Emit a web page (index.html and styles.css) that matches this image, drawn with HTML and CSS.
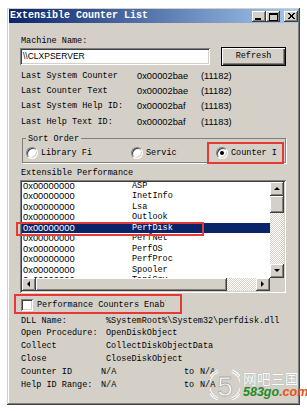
FILE: index.html
```html
<!DOCTYPE html>
<html lang="en">
<head>
    <meta charset="UTF-8">
    <meta name="viewport" content="width=device-width, initial-scale=1.0">
    <title>Extensible Counter List</title>
    <link rel="stylesheet" href="styles.css">
</head>
<body>
    <div class="window">
        <div class="titlebar">
            <span class="title">Extensible Counter List</span>
            <span class="ctl ctl-min"></span>
            <span class="ctl ctl-max"></span>
            <span class="ctl ctl-close">
                <svg width="14" height="11" viewBox="0 0 14 11">
                    <path d="M4 2 L10 8 M5 2 L11 8 M10 2 L4 8 M11 2 L5 8" stroke="#000" stroke-width="1"/>
                </svg>
            </span>
        </div>
        <div class="content">
            <div class="label">Machine Name:</div>
            <div class="machine-row">
                <div class="textbox">\\CLXPSERVER</div>
                <div class="button">Refresh</div>
            </div>
            <div class="info">
                <span>Last System Counter</span><span class="num">0x00002bae</span><span class="num">(11182)</span>
                <span>Last Counter Text</span><span class="num">0x00002bae</span><span class="num">(11182)</span>
                <span>Last System Help ID:</span><span class="num">0x00002baf</span><span class="num">(11183)</span>
                <span>Last Help Text ID:</span><span class="num">0x00002baf</span><span class="num">(11183)</span>
            </div>
            <fieldset class="group">
                <legend>Sort Order</legend>
                <div class="radios">
                    <label class="radio"><span class="radio-box"></span>Library Fi</label>
                    <label class="radio"><span class="radio-box"></span>Servic</label>
                    <label class="radio marked"><span class="radio-box checked"></span>Counter I</label>
                </div>
            </fieldset>
            <div class="label list-label">Extensible Performance</div>
            <div class="listbox">
                <div class="rows">
                    <div class="row"><span class="hex">0x00000000</span><span>ASP</span></div>
                    <div class="row"><span class="hex">0x00000000</span><span>InetInfo</span></div>
                    <div class="row"><span class="hex">0x00000000</span><span>Lsa</span></div>
                    <div class="row"><span class="hex">0x00000000</span><span>Outlook</span></div>
                    <div class="row selected"><span class="hex">0x00000000</span><span>PerfDisk</span></div>
                    <div class="row"><span class="hex">0x00000000</span><span>PerfNet</span></div>
                    <div class="row"><span class="hex">0x00000000</span><span>PerfOS</span></div>
                    <div class="row"><span class="hex">0x00000000</span><span>PerfProc</span></div>
                    <div class="row"><span class="hex">0x00000000</span><span>Spooler</span></div>
                    <div class="row"><span class="hex">0x00000000</span><span>TapiSrv</span></div>
                </div>
                <div class="vscroll">
                    <span class="sbtn arrow-up"></span>
                    <span class="sbtn vthumb"></span>
                    <span class="track"></span>
                    <span class="sbtn arrow-down"></span>
                </div>
                <div class="hscroll">
                    <span class="sbtn arrow-left"></span>
                    <span class="sbtn hthumb"></span>
                    <span class="track"></span>
                    <span class="sbtn arrow-right"></span>
                </div>
                <div class="corner"></div>
                <div class="mark-row"></div>
            </div>
            <div class="check-row">
                <span class="check-box"></span>
                <span class="check-text">Performance Counters Enabled</span>
            </div>
            <div class="details">
                <span>DLL Name:</span><span>%SystemRoot%\System32\perfdisk.dll</span>
                <span>Open Procedure:</span><span>OpenDiskObject</span>
                <span>Collect</span><span>CollectDiskObjectData</span>
                <span>Close</span><span>CloseDiskObject</span>
            </div>
            <div class="range">
                <span>Counter ID</span><span>N/A</span><span>to</span><span>N/A</span>
                <span>Help ID Range:</span><span>N/A</span><span>to</span><span>N/A</span>
            </div>
        </div>
        <div class="watermark">
            <svg width="30" height="36" viewBox="0 0 30 36">
                <path d="M8 4 A15 15 0 0 0 8 32" fill="none" stroke="#fff" stroke-width="3"/>
                <path d="M8 4 A15 15 0 0 0 8 32" fill="none" stroke="#bbb" stroke-width="1"/>
                <path d="M22 4 A15 15 0 0 1 22 32" fill="none" stroke="#fff" stroke-width="3"/>
                <path d="M22 4 A15 15 0 0 1 22 32" fill="none" stroke="#bbb" stroke-width="1"/>
                <text x="15" y="29" text-anchor="middle" font-family="Liberation Sans, sans-serif" font-size="28" fill="#fff" stroke="#aaa" stroke-width="0.8">5</text>
            </svg>
            <div class="wm-text">
                <span class="wm-cn">网吧三国</span>
                <span class="wm-site"><b>583go</b><i>.com</i></span>
            </div>
        </div>
    </div>
</body>
</html>
```

FILE: styles.css
```css
body {
    margin: 0;
    background: #fff;
    font-family: "Liberation Mono", monospace;
    font-size: 8.5px;
    color: #000;
}
.window {
    position: relative;
    margin: 8px 0 0 7px;
    width: 293px;
    height: 397px;
    box-sizing: border-box;
    padding: 1px 2px 2px;
    background: #d4d0c8;
    box-shadow: inset -1px -1px #404040, inset 1px 1px #d4d0c8, inset -2px -2px #808080, inset 2px 2px #fff;
}
.titlebar {
    display: flex;
    align-items: center;
    height: 14px;
    padding-left: 1px;
    background: linear-gradient(to right, #0a246a, #a6caf0);
    color: #fff;
}
.title {
    flex: 1;
    font-weight: bold;
    font-size: 10px;
    line-height: 14px;
}
.ctl {
    position: relative;
    width: 14px;
    height: 11px;
    background: #d4d0c8;
    box-shadow: inset -1px -1px #404040, inset 1px 1px #fff, inset -2px -2px #808080;
}
.ctl-close {
    margin-left: 4px;
}
.ctl-close svg {
    display: block;
}
.ctl-min::after {
    content: "";
    position: absolute;
    left: 3px;
    top: 7px;
    width: 6px;
    height: 2px;
    background: #000;
}
.ctl-max::after {
    content: "";
    position: absolute;
    left: 3px;
    top: 2px;
    width: 7px;
    height: 5px;
    border: 1px solid #000;
    border-top-width: 2px;
}
.content {
    padding: 13px 0 0 12px;
}
.label {
    line-height: 11px;
}
.machine-row {
    display: flex;
    align-items: center;
    gap: 11px;
    height: 19px;
    margin-left: -1px;
}
.textbox {
    width: 190px;
    height: 17px;
    box-sizing: border-box;
    padding-left: 3px;
    background: #fff;
    font-family: "Liberation Sans", sans-serif;
    font-size: 8.5px;
    line-height: 17px;
    box-shadow: inset 1px 1px #808080, inset -1px -1px #fff, inset 2px 2px #404040, inset -2px -2px #d4d0c8;
}
.button {
    width: 65px;
    height: 19px;
    box-sizing: border-box;
    border: 1px solid #000;
    text-align: center;
    line-height: 17px;
    box-shadow: inset 1px 1px #fff, inset -1px -1px #404040, inset -2px -2px #808080;
}
.info {
    display: grid;
    grid-template-columns: 116px 64px auto;
    grid-auto-rows: 15.3px;
    align-items: center;
    margin-top: 2px;
}
.num {
    font-family: "Liberation Sans", sans-serif;
    font-size: 9.3px;
}
.group {
    width: 264px;
    box-sizing: border-box;
    margin: 3.5px 0 0 1px;
    padding: 2px 3px 3px;
    border: 1px solid #808080;
    box-shadow: 1px 1px 0 #fff;
}
.group legend {
    padding: 0 2px;
    line-height: 12px;
}
.radios {
    display: grid;
    grid-template-columns: 105px 85px 1fr;
    height: 12px;
}
.radio {
    position: relative;
    display: flex;
    align-items: center;
    gap: 3px;
}
.radio-box {
    position: relative;
    width: 12px;
    height: 12px;
    box-sizing: border-box;
    border-radius: 50%;
    background: #fff;
    border: 1px solid;
    border-color: #808080 #fff #fff #808080;
    box-shadow: inset 1px 1px #404040, inset -1px -1px #d4d0c8;
}
.radio-box.checked::after {
    content: "";
    position: absolute;
    left: 3px;
    top: 3px;
    width: 4px;
    height: 4px;
    border-radius: 50%;
    background: #000;
}
.marked::after {
    content: "";
    position: absolute;
    left: -9px;
    right: -2px;
    top: -5px;
    bottom: -5px;
    border: 2px solid #e53935;
}
.list-label {
    margin-top: 4px;
    line-height: 13px;
}
.listbox {
    position: relative;
    display: grid;
    grid-template-columns: 1fr 14px;
    grid-template-rows: 1fr 13px;
    width: 266px;
    height: 113px;
    box-sizing: border-box;
    margin-left: -1px;
    padding: 2px;
    background: #fff;
    box-shadow: inset 1px 1px #808080, inset -1px -1px #fff, inset 2px 2px #404040, inset -2px -2px #d4d0c8;
}
.rows {
    overflow: hidden;
}
.row {
    display: grid;
    grid-template-columns: 109px 1fr;
    height: 10.5px;
    line-height: 10.5px;
    padding-left: 1px;
    white-space: nowrap;
}
.row:first-child {
    margin-top: -1px;
}
.hex {
    font-family: "Liberation Sans", sans-serif;
    font-size: 9.4px;
}
.row.selected {
    background: #0a246a;
    color: #fff;
}
.vscroll, .hscroll {
    display: flex;
    background: repeating-conic-gradient(#d4d0c8 0 25%, #fff 0 50%) 0 0 / 2px 2px;
}
.vscroll {
    flex-direction: column;
}
.track {
    flex: 1;
}
.sbtn {
    position: relative;
    flex: none;
    width: 14px;
    height: 14px;
    box-sizing: border-box;
    background: #d4d0c8;
    box-shadow: inset -1px -1px #404040, inset 1px 1px #fff, inset -2px -2px #808080;
}
.hscroll .sbtn {
    height: 13px;
}
.vthumb {
    height: 17px;
}
.hthumb {
    width: 191px;
}
.arrow-up::after, .arrow-down::after, .arrow-left::after, .arrow-right::after {
    content: "";
    position: absolute;
    width: 0;
    height: 0;
    border: 3px solid transparent;
}
.arrow-up::after {
    left: 4px;
    top: 2px;
    border-bottom: 3px solid #000;
}
.arrow-down::after {
    left: 4px;
    top: 5px;
    border-top: 3px solid #000;
}
.arrow-left::after {
    left: 2px;
    top: 3px;
    border-right: 3px solid #000;
}
.arrow-right::after {
    left: 5px;
    top: 3px;
    border-left: 3px solid #000;
}
.corner {
    background: #d4d0c8;
}
.mark-row {
    position: absolute;
    left: -4px;
    top: 42px;
    width: 188px;
    height: 14px;
    box-sizing: border-box;
    border: 2px solid #e53935;
}
.check-row {
    position: relative;
    display: flex;
    align-items: center;
    gap: 4px;
    height: 12px;
    margin-top: 6px;
}
.check-row::after {
    content: "";
    position: absolute;
    left: -7px;
    top: -5px;
    width: 168px;
    height: 20px;
    box-sizing: border-box;
    border: 2px solid #e53935;
}
.check-box {
    width: 12px;
    height: 12px;
    box-sizing: border-box;
    background: #fff;
    box-shadow: inset 1px 1px #808080, inset -1px -1px #fff, inset 2px 2px #404040, inset -2px -2px #d4d0c8;
}
.check-text {
    width: 129px;
    overflow: hidden;
    white-space: nowrap;
}
.details {
    display: grid;
    grid-template-columns: 85px auto;
    grid-auto-rows: 12.8px;
    align-items: center;
    margin-top: 3.6px;
}
.range {
    display: grid;
    grid-template-columns: 80px 83px 16px auto;
    grid-auto-rows: 12.8px;
    align-items: center;
}
.watermark {
    position: absolute;
    left: 203px;
    top: 359px;
    display: flex;
    align-items: center;
    gap: 3px;
}
.watermark svg {
    display: block;
}
.wm-text {
    display: flex;
    flex-direction: column;
    line-height: 16px;
}
.wm-cn {
    font-family: "Noto Sans CJK SC", sans-serif;
    font-size: 13.5px;
    color: #fff;
    letter-spacing: 0.5px;
    text-shadow: 0 0 1px #999;
}
.wm-site {
    font-family: "Liberation Sans", sans-serif;
    font-size: 12.5px;
    font-weight: bold;
    font-style: italic;
    margin-top: -2px;
}
.wm-site b {
    color: #1f8a2a;
}
.wm-site i {
    color: #e5531a;
}
```
